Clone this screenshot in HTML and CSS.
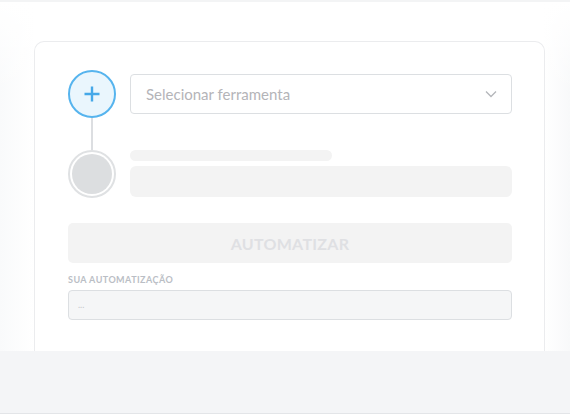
FILE: index.html
```html
<!DOCTYPE html>
<html lang="pt">
<head>
<meta charset="utf-8">
<link rel="stylesheet" href="styles.css">
</head>
<body>
<div class="page">
  <main class="stage">
    <section class="card">
      <div class="flow">
        <div class="step-col">
          <div class="node node-add">
            <svg width="18" height="18" viewBox="0 0 18 18"><path d="M9 1.5v15M1.5 9h15" stroke="#45a8e8" stroke-width="2.4" fill="none" stroke-linecap="butt"/></svg>
          </div>
          <div class="connector"></div>
          <div class="node node-empty"><span class="node-core"></span></div>
        </div>
        <div class="fields">
          <div class="select">
            <span class="select-text">Selecionar ferramenta</span>
            <svg class="chev" width="12" height="8" viewBox="0 0 12 8"><path d="M1 1.5l5 5 5-5" stroke="#b4b6ba" stroke-width="1.3" fill="none"/></svg>
          </div>
          <div class="skeleton">
            <div class="sk sk-short"></div>
            <div class="sk sk-long"></div>
          </div>
        </div>
      </div>
      <button class="btn" type="button">AUTOMATIZAR</button>
      <div class="label">SUA AUTOMATIZAÇÃO</div>
      <div class="output">...</div>
    </section>
  </main>
  <footer class="foot"></footer>
</div>
</body>
</html>
```
FILE: styles.css
```css
* { box-sizing: border-box; }
html, body { margin: 0; padding: 0; }
body {
  width: 570px;
  height: 414px;
  overflow: hidden;
  font-family: "Lato", "Open Sans", "Liberation Sans", sans-serif;
  background: #ffffff;
}
.page {
  display: flex;
  flex-direction: column;
  height: 414px;
  border-top: 2px solid #f3f4f5;
}
.stage {
  flex: 1;
  padding: 39px 25px 0 34px;
  background:
    linear-gradient(180deg, #ffffff 0, rgba(255,255,255,0) 90px),
    linear-gradient(90deg, #f9fafb 0, #ffffff 34px, #ffffff 544px, #f8f9fa 570px);
  display: flex;
  flex-direction: column;
  overflow: hidden;
}
.card {
  flex: 1;
  background: #ffffff;
  border: 1px solid #ebecee;
  border-bottom: none;
  border-radius: 10px 10px 0 0;
  padding: 28px 32px 0 33px;
}
.flow {
  display: flex;
  gap: 14px;
}
.step-col {
  width: 48px;
  display: flex;
  flex-direction: column;
  align-items: center;
}
.node {
  width: 48px;
  height: 48px;
  border-radius: 50%;
  display: flex;
  align-items: center;
  justify-content: center;
  flex: none;
}
.node-add {
  background: #eaf6fd;
  border: 2px solid #56b4ee;
}
.connector {
  width: 2px;
  height: 32px;
  background: #dcdee1;
}
.node-empty {
  border: 2px solid #dfe1e3;
  padding: 2px;
  background: #ffffff;
}
.node-core {
  display: block;
  width: 100%;
  height: 100%;
  border-radius: 50%;
  background: #dcdee0;
}
.fields {
  flex: 1;
  display: flex;
  flex-direction: column;
}
.select {
  margin-top: 4px;
  height: 40px;
  border: 1px solid #dcdfe2;
  border-radius: 4px;
  display: flex;
  align-items: center;
  justify-content: space-between;
  padding: 0 14px 0 15px;
}
.select-text {
  font-size: 15px;
  color: #b4b4b8;
}
.chev { display: block; }
.skeleton {
  margin-top: 36px;
  display: flex;
  flex-direction: column;
  gap: 5px;
}
.sk {
  background: #f3f3f3;
  border-radius: 6px;
}
.sk-short { width: 202px; height: 11px; }
.sk-long { height: 31px; }
.btn {
  display: block;
  width: 100%;
  margin-top: 25px;
  height: 40px;
  border: none;
  border-radius: 5px;
  background: #f3f3f3;
  color: #dfe0e3;
  font-family: inherit;
  font-weight: 700;
  font-size: 16px;
  letter-spacing: 0.3px;
}
.label {
  margin-top: 11px;
  font-size: 9px;
  font-weight: 700;
  letter-spacing: 0.45px;
  color: #babec5;
  line-height: 12px;
}
.output {
  margin-top: 4px;
  height: 30px;
  border: 1px solid #dcdfe2;
  border-radius: 4px;
  background: #f5f6f7;
  padding: 0 9px;
  font-size: 9px;
  color: #c6c8cc;
  line-height: 28px;
}
.foot {
  height: 63px;
  flex: none;
  background: #f4f5f7;
  border-bottom: 1px solid #e3e5e8;
}
```
